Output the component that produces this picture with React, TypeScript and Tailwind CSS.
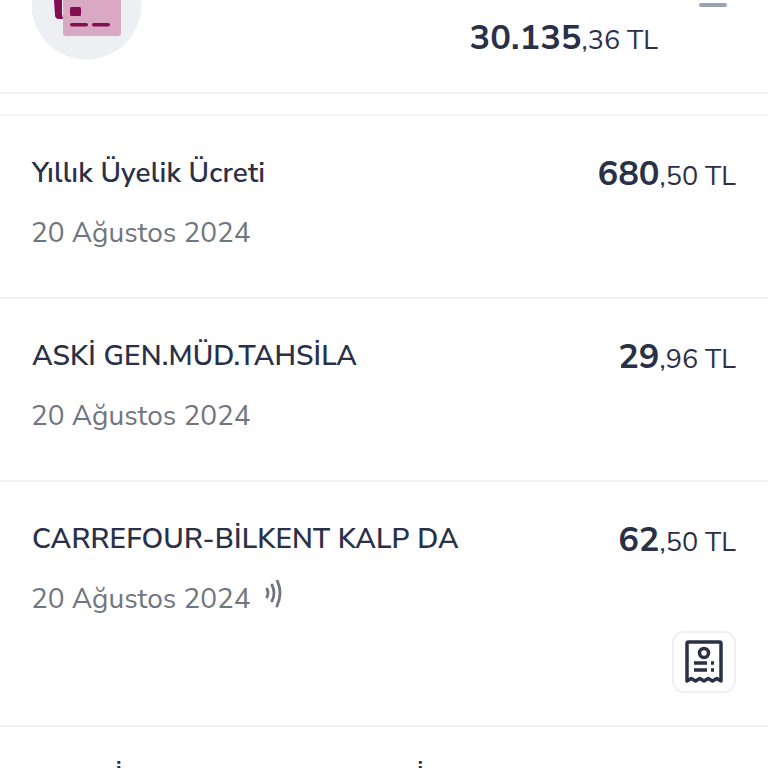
import "react";

const font = { fontFamily: '"Nunito Sans", Inter, "Noto Sans", sans-serif' };

function CardIcon() {
  return (
    <svg width="110" height="60" viewBox="0 0 110 60" className="block">
      <circle cx="54.500" cy="4.500" r="55" fill="#edeff3" />
      <path d="M22 0h8v14l1 5h-4q-4 0-4-4z" fill="#850d52" />
      <path d="M31 0h58v33q0 3-3 3H34q-3 0-3-3z" fill="#d9a9c3" />
      <rect x="38" y="7" width="11" height="9" rx="1.500" fill="#850d52" />
      <rect x="38" y="23" width="18" height="3.500" rx="1.700" fill="#850d52" />
      <rect x="60" y="23" width="18" height="3.500" rx="1.700" fill="#850d52" />
    </svg>
  );
}

function ReceiptIcon() {
  return (
    <svg width="38" height="44" viewBox="0 0 38 44" fill="none" stroke="#2a3047" strokeWidth="3.500">
      <path d="M2 41V3.500q0-1.500 1.500-1.500h31q1.500 0 1.500 1.500V41l-4.250-2.500-4.250 2.500-4.250-2.500L19 41l-4.250-2.500-4.250 2.500-4.250-2.500z" strokeLinejoin="round" />
      <circle cx="19" cy="13" r="4.500" />
      <path d="M9 23h13M26 23h3M9 30h13M26 30h3" />
    </svg>
  );
}

function Amount({ whole, cents }: { whole: string; cents: string }) {
  return (
    <div className="text-[27px] leading-[34px] text-[#2a3047] whitespace-nowrap">
      <span className="font-bold text-[34.500px]">{whole}</span>
      <span>,{cents} TL</span>
    </div>
  );
}

function Row({ title, whole, cents, tall }: { title: string; whole: string; cents: string; tall?: boolean }) {
  return (
    <div className={`border-b-2 border-[#f1f2f4] px-8 pt-[41px] ${tall ? "h-[245px]" : "h-[183px]"}`}>
      <div className="flex justify-between">
        <div className="-mt-px text-[28px] leading-[34px] font-semibold tracking-[0.15px] text-[#2a3047]">{title}</div>
        <Amount whole={whole} cents={cents} />
      </div>
      <div className="mt-[22px] -ml-px flex items-start gap-[14px] text-[28px] leading-[34px] text-[#70757f]">
        20 Ağustos 2024
        {tall && (
          <svg className="-mt-[2px]" width="18" height="30" viewBox="0 0 18 30" fill="none" stroke="#70757f" strokeWidth="2.800" strokeLinecap="round">
            <path d="M2 9q2 4 0 8M7 5q4 8 0 16M12 0q6 13 0 26" />
          </svg>
        )}
      </div>
      {tall && (
        <div className="flex justify-end mt-[15px]">
          <div className="w-[64px] h-[62px] rounded-xl border-2 border-[#eef0f4] flex items-center justify-center">
            <ReceiptIcon />
          </div>
        </div>
      )}
    </div>
  );
}

export default function App() {
  return (
    <div className="w-[768px] h-[768px] overflow-hidden bg-white" style={font}>
      <div className="h-[94px] border-b-2 border-[#f1f2f4] flex justify-between px-8">
        <CardIcon />
        <div className="flex flex-col items-end">
          <div className="w-[28px] h-[4px] mt-[3px] mr-[9px] rounded-full bg-[#9aa3b5]" />
          <div className="mt-[14px] mr-[78px]">
            <Amount whole="30.135" cents="36" />
          </div>
        </div>
      </div>
      <div className="h-[22px] border-b-2 border-[#f4f5f6]" />
      <Row title="Yıllık Üyelik Ücreti" whole="680" cents="50" />
      <Row title="ASKİ GEN.MÜD.TAHSİLA" whole="29" cents="96" />
      <Row title="CARREFOUR-BİLKENT KALP DA" whole="62" cents="50" tall />
      <div className="flex pl-[115px] pt-[33px] text-[28px] leading-[34px] font-semibold text-[#2a3047]">
        <span>İ</span>
        <span className="ml-[294px]">İ</span>
      </div>
    </div>
  );
}
